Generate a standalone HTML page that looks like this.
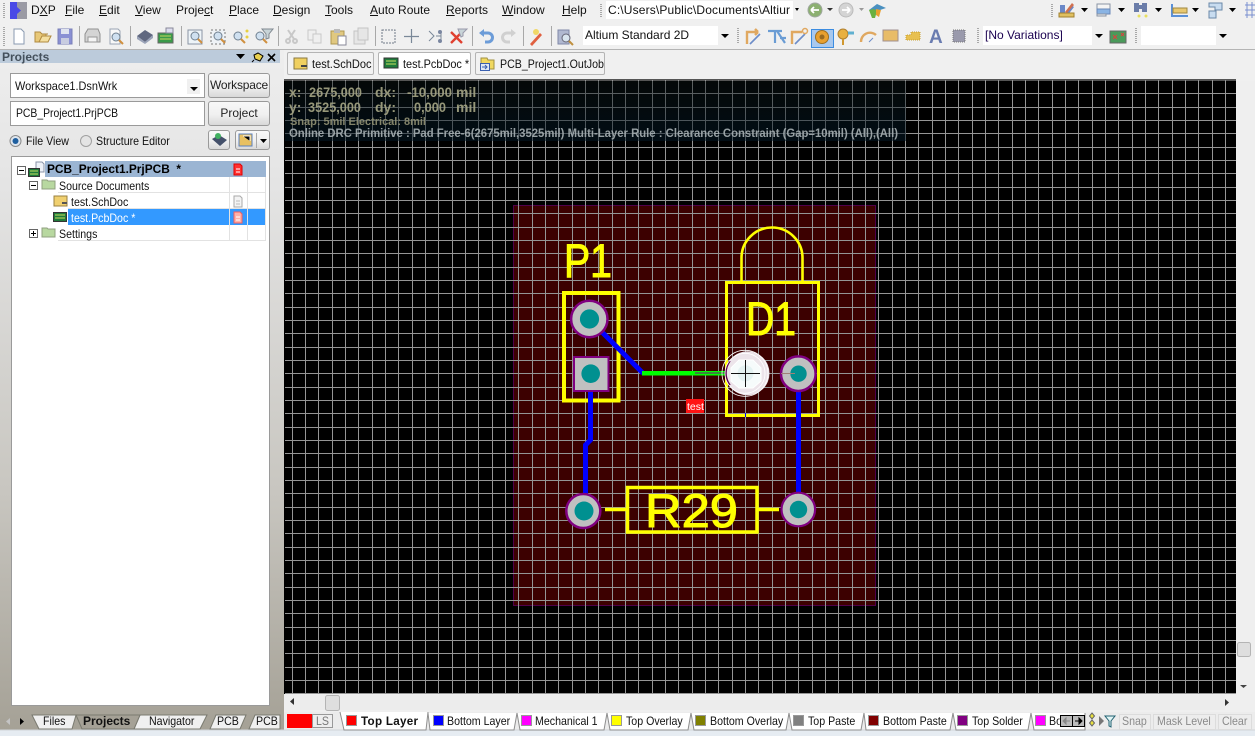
<!DOCTYPE html>
<html><head><meta charset="utf-8"><title>Altium</title>
<style>
html,body{margin:0;padding:0;width:1255px;height:736px;overflow:hidden;background:#f0f0f0}
body{position:relative;font:12px/14px "Liberation Sans",sans-serif;color:#111}
.a{position:absolute}
.t{position:absolute;white-space:nowrap;font:12px/14px "Liberation Sans",sans-serif;color:#111}
.n{transform:scaleX(.885);transform-origin:0 50%}
u{text-decoration:underline}
.btn{position:absolute;box-sizing:border-box;border:1px solid #9a9a9a;border-radius:3px;background:linear-gradient(#f8f8f8,#f0f0f0 55%,#d8d8d8);text-align:center;font:12px/22px "Liberation Sans",sans-serif;color:#222}
.field{position:absolute;box-sizing:border-box;background:#fff;border:1px solid #9a9a9a}
.combo{position:absolute;background:#fff;font:12px/19px "Liberation Sans",sans-serif;overflow:hidden;white-space:nowrap}
.dd{position:absolute;right:0;top:0;width:13px;height:100%;background:#f0f0f0}
.dd:after{content:"";position:absolute;left:3px;top:8px;border:4px solid transparent;border-top:4px solid #000;border-bottom:0}
.tab{position:absolute;box-sizing:border-box;top:52px;height:23px;border:1px solid #b4b4b4;border-radius:2px;background:#f2f2f2}
.row{position:absolute;left:0;width:254px;height:16px;border-bottom:1px solid #e2e2e2;box-sizing:border-box}
.sw{position:absolute;box-sizing:border-box;width:11px;height:11px;top:715px;border:1px solid #999}
.lb{position:absolute;box-sizing:border-box;top:714px;height:16px;background:#ededed;border:1px solid #dcdcdc}
</style></head><body>

<div class="a" style="left:0;top:49px;width:1255px;height:1px;background:#b4b4b4"></div>

<!-- left panel -->
<div class="a" style="left:0;top:50px;width:284px;height:680px;background:linear-gradient(#eeeeee 0,#e4e4e4 20%,#c8c6c0 65%,#a5a196 100%)"></div>
<div class="a" style="left:0;top:50px;width:280px;height:13px;background:#bccbdb"></div>
<div class="t" style="left:2px;top:50px;font-weight:bold;color:#44505c">Projects</div>

<div class="field" style="left:10px;top:73px;width:195px;height:25px"></div>
<div class="t n" style="left:15px;top:79px;transform:scaleX(.91)">Workspace1.DsnWrk</div>
<div class="dd" style="left:187px;top:79px;width:13px;height:15px;right:auto;background:#f0f0f0"></div>
<div class="btn" style="left:208px;top:73px;width:62px;height:25px;letter-spacing:-.2px">Workspace</div>
<div class="field" style="left:10px;top:101px;width:195px;height:25px"></div>
<div class="t n" style="left:16px;top:106px;transform:scaleX(.865)">PCB_Project1.PrjPCB</div>
<div class="btn" style="left:208px;top:101px;width:62px;height:25px">Project</div>
<div class="t n" style="left:26px;top:134px">File View</div>
<div class="t n" style="left:96px;top:134px">Structure Editor</div>
<div class="btn" style="left:208px;top:130px;width:22px;height:20px"></div>
<div class="btn" style="left:235px;top:130px;width:35px;height:20px"></div>

<!-- tree -->
<div class="a" style="left:11px;top:156px;width:259px;height:550px;box-sizing:border-box;background:#fff;border:1px solid #9a9a9a">
  <div class="a" style="left:33px;top:4px;width:221px;height:16px;background:#9bb5d3"></div>
  <div class="t" style="left:35px;top:5px;font-weight:bold;color:#000;transform:scaleX(.99);transform-origin:0 50%">PCB_Project1.PrjPCB&nbsp; *</div>
  <div class="row" style="top:20px;left:46px;width:208px"></div>
  <div class="t n" style="left:47px;top:22px">Source Documents</div>
  <div class="row" style="top:36px;left:56px;width:198px"></div>
  <div class="t n" style="left:59px;top:38px">test.SchDoc</div>
  <div class="a" style="left:56px;top:52px;width:198px;height:16px;background:#3399ff"></div>
  <div class="t n" style="left:59px;top:54px;color:#fff">test.PcbDoc *</div>
  <div class="row" style="top:68px;left:46px;width:208px"></div>
  <div class="t n" style="left:47px;top:70px">Settings</div>
  <div class="a" style="left:217px;top:20px;width:1px;height:64px;background:#e2e2e2"></div>
  <div class="a" style="left:235px;top:20px;width:1px;height:64px;background:#e2e2e2"></div>
  <div class="a" style="left:253px;top:20px;width:1px;height:64px;background:#e2e2e2"></div>
</div>

<!-- menu -->
<div class="t" style="left:31px;top:3px">D<u>X</u>P</div>
<div class="t" style="left:65px;top:3px"><u>F</u>ile</div>
<div class="t" style="left:99px;top:3px"><u>E</u>dit</div>
<div class="t" style="left:135px;top:3px"><u>V</u>iew</div>
<div class="t" style="left:176px;top:3px">Proje<u>c</u>t</div>
<div class="t" style="left:229px;top:3px"><u>P</u>lace</div>
<div class="t" style="left:273px;top:3px"><u>D</u>esign</div>
<div class="t" style="left:325px;top:3px"><u>T</u>ools</div>
<div class="t" style="left:370px;top:3px"><u>A</u>uto Route</div>
<div class="t" style="left:446px;top:3px"><u>R</u>eports</div>
<div class="t" style="left:502px;top:3px"><u>W</u>indow</div>
<div class="t" style="left:562px;top:3px"><u>H</u>elp</div>

<div class="combo" style="left:606px;top:1px;width:187px;height:18px;padding-left:2px;line-height:18px;box-sizing:border-box;letter-spacing:.15px">C:\Users\Public\Documents\Altiur</div>
<div class="combo" style="left:583px;top:26px;width:148px;height:19px;padding-left:2px;box-sizing:border-box">Altium Standard 2D<div class="dd"></div></div>
<div class="combo" style="left:983px;top:26px;width:122px;height:19px;padding-left:2px;box-sizing:border-box;color:#1a0050">[No Variations]<div class="dd"></div></div>
<div class="combo" style="left:1141px;top:26px;width:88px;height:19px"><div class="dd"></div></div>

<!-- doc tabs -->
<div class="tab" style="left:287px;width:87px"></div><div class="t" style="left:312px;top:57px;transform:scaleX(.92);transform-origin:0 50%">test.SchDoc</div>
<div class="tab" style="left:378px;width:93px;background:#fff"></div><div class="t" style="left:403px;top:57px;transform:scaleX(.91);transform-origin:0 50%">test.PcbDoc *</div>
<div class="tab" style="left:475px;width:130px"></div><div class="t" style="left:500px;top:57px;transform:scaleX(.885);transform-origin:0 50%">PCB_Project1.OutJob</div>

<!-- canvas -->
<div class="a" style="left:284px;top:79px;width:952px;height:615px;background:#000"></div>
<div class="a" style="left:284px;top:79px;width:952px;height:2px;background:#555"></div>
<div class="a" style="left:513px;top:205px;width:363px;height:401px;box-sizing:border-box;background:#3c0000;border:1px solid #50004a"></div>

<!-- grid -->
<svg class="a" style="left:0;top:0" width="1255" height="736" viewBox="0 0 1255 736" shape-rendering="crispEdges">
  <path fill="none" stroke="#959595" stroke-width="1" d="M292.5 80V694M305.5 80V694M318.5 80V694M332.5 80V694M345.5 80V694M358.5 80V694M372.5 80V694M385.5 80V694M398.5 80V694M412.5 80V694M425.5 80V694M438.5 80V694M452.5 80V694M465.5 80V694M478.5 80V694M492.5 80V694M505.5 80V694M518.5 80V694M532.5 80V694M545.5 80V694M558.5 80V694M572.5 80V694M585.5 80V694M598.5 80V694M612.5 80V694M625.5 80V694M638.5 80V694M652.5 80V694M665.5 80V694M678.5 80V694M692.5 80V694M705.5 80V694M718.5 80V694M732.5 80V694M745.5 80V694M758.5 80V694M772.5 80V694M785.5 80V694M798.5 80V694M812.5 80V694M825.5 80V694M838.5 80V694M852.5 80V694M865.5 80V694M878.5 80V694M892.5 80V694M905.5 80V694M918.5 80V694M932.5 80V694M945.5 80V694M958.5 80V694M972.5 80V694M985.5 80V694M998.5 80V694M1012.5 80V694M1025.5 80V694M1038.5 80V694M1052.5 80V694M1065.5 80V694M1078.5 80V694M1092.5 80V694M1105.5 80V694M1118.5 80V694M1132.5 80V694M1145.5 80V694M1158.5 80V694M1172.5 80V694M1185.5 80V694M1198.5 80V694M1212.5 80V694M1225.5 80V694"/>
  <path fill="none" stroke="#959595" stroke-width="1" d="M285 93.500H1236M285 107.500H1236M285 120.500H1236M285 133.500H1236M285 147.500H1236M285 160.500H1236M285 173.500H1236M285 187.500H1236M285 200.500H1236M285 213.500H1236M285 227.500H1236M285 240.500H1236M285 253.500H1236M285 267.500H1236M285 280.500H1236M285 293.500H1236M285 307.500H1236M285 320.500H1236M285 333.500H1236M285 347.500H1236M285 360.500H1236M285 373.500H1236M285 387.500H1236M285 400.500H1236M285 413.500H1236M285 427.500H1236M285 440.500H1236M285 453.500H1236M285 467.500H1236M285 480.500H1236M285 493.500H1236M285 507.500H1236M285 520.500H1236M285 533.500H1236M285 547.500H1236M285 560.500H1236M285 573.500H1236M285 587.500H1236M285 600.500H1236M285 613.500H1236M285 627.500H1236M285 640.500H1236M285 653.500H1236M285 667.500H1236M285 680.500H1236M285 693.500H1236"/>
</svg>

<!-- HUD over grid -->
<div class="a" style="left:285px;top:81px;width:621px;height:60px;background:linear-gradient(rgba(10,20,20,.4),rgba(3,24,38,.55))"></div>
<svg class="a" style="left:0;top:0" width="1255" height="736" viewBox="0 0 1255 736" font-family="Liberation Sans, sans-serif" opacity=".92">
  <g font-weight="bold" fill="#a3a383" font-size="14">
    <text x="289" y="97">x:</text><text x="309" y="97" textLength="53" lengthAdjust="spacingAndGlyphs">2675,000</text><text x="375" y="97">dx:</text><text x="407" y="97" textLength="45" lengthAdjust="spacingAndGlyphs">-10,000</text><text x="456" y="97">mil</text>
    <text x="289" y="112">y:</text><text x="308" y="112" textLength="53" lengthAdjust="spacingAndGlyphs">3525,000</text><text x="375" y="112">dy:</text><text x="414" y="112" textLength="32" lengthAdjust="spacingAndGlyphs">0,000</text><text x="456" y="112">mil</text>
  </g>
  <text x="290" y="125" font-size="11" font-weight="bold" fill="#8f8f72" textLength="136" lengthAdjust="spacingAndGlyphs">Snap: 5mil Electrical: 8mil</text>
  <text x="289" y="137" font-size="11.5" font-weight="bold" fill="#a4adb0" textLength="609" lengthAdjust="spacingAndGlyphs">Online DRC Primitive : Pad Free-6(2675mil,3525mil)  Multi-Layer Rule : Clearance Constraint (Gap=10mil) (All),(All)</text>
</svg>

<!-- PCB + chrome svg -->
<svg class="a" style="left:0;top:0" width="1255" height="736" viewBox="0 0 1255 736" font-family="Liberation Sans, sans-serif">
  <!-- silk -->
  <g fill="none" stroke="#ffff00" stroke-width="3">
    <rect x="564" y="293" width="54.500" height="107.500" stroke-width="4"/>
    <rect x="726.500" y="282.500" width="92" height="133"/>
    <path d="M741.500 281V258A30.500 30.500 0 0 1 802.500 258V281" stroke-width="2.600"/>
    <rect x="627.500" y="487.500" width="129.500" height="44.500" stroke-width="3.500"/>
    <path d="M605 509.500H626M758 509.500H779" stroke-width="3.600"/>
  </g>
  <g fill="#ffff00" stroke="#ffff00" stroke-width="1" font-size="47">
    <text x="564" y="277" textLength="48" lengthAdjust="spacingAndGlyphs">P1</text>
    <text x="746" y="335" textLength="50" lengthAdjust="spacingAndGlyphs">D1</text>
    <text x="645" y="527" textLength="93" lengthAdjust="spacingAndGlyphs">R29</text>
  </g>

  <!-- traces -->
  <g fill="none" stroke="#0000ff" stroke-width="5">
    <path d="M601.700 331.700L643 373.300"/>
    <path d="M590.500 391V440L585.500 445V495"/>
    <path d="M798.500 391V494"/>
  </g>
  <path d="M642 373.300H727" stroke="#00ff00" stroke-width="4.500"/>
  <path d="M695 373H727" stroke="#800080" stroke-width="1"/>

  <!-- pads -->
  <g>
    <circle cx="589.300" cy="319" r="18.200" fill="#c0c0c0" stroke="#800080" stroke-width="2.500"/>
    <circle cx="589.500" cy="319" r="9.600" fill="#009090"/>
    <rect x="574" y="357" width="34.500" height="34" fill="#c0c0c0" stroke="#800080" stroke-width="2"/>
    <circle cx="590.700" cy="373.700" r="9.300" fill="#009090"/>
    <circle cx="798.300" cy="373.700" r="17.300" fill="#c0c0c0" stroke="#800080" stroke-width="2.500"/>
    <circle cx="798.500" cy="373.700" r="8.200" fill="#009090"/>
    <path d="M781 373.500H795" stroke="#a08078" stroke-width="1"/>
    <circle cx="583.300" cy="511" r="17" fill="#c0c0c0" stroke="#800080" stroke-width="2.500"/>
    <circle cx="584" cy="511" r="9.500" fill="#009090"/>
    <circle cx="798.300" cy="509.500" r="16.800" fill="#c0c0c0" stroke="#800080" stroke-width="2.200"/>
    <circle cx="798.500" cy="509.500" r="8.700" fill="#009090"/>
    <!-- ghost pad -->
    <circle cx="747.500" cy="373.300" r="22" fill="#ece4ea"/>
    <path d="M730 385a20 20 0 0 1 0-24" fill="none" stroke="#600050" stroke-width="1.500"/>
    <path d="M739 360H753L761 368V381L753 388H739L731 381V368Z" fill="#f6fbfb" stroke="#fff"/>
    <circle cx="745.500" cy="373.300" r="8" fill="#e4f2f2"/>
    <circle cx="745" cy="373.300" r="20" fill="none" stroke="#fff" stroke-width=".8"/>
    <circle cx="745" cy="373.300" r="23" fill="none" stroke="#fff" stroke-width=".8"/>
    <path d="M745.500 360V387M731 373.500H760" stroke="#111" stroke-width="1"/>
    <path d="M745.500 413V417" stroke="#0000ff"/>
  </g>
  <rect x="686" y="399" width="18" height="14" fill="#ff1414"/>
  <text x="687" y="410" font-size="10.500" fill="#fff">test</text>

  <!-- DXP logo + grips -->
  <rect x="10" y="2" width="17" height="17" fill="#4a4ae6"/>
  <path d="M17 2H27V19H17V14L21 10.500 17 7Z" fill="#9a9aa4"/>
  <path d="M4 3V18M4 27V46M1052 4V18M738 28V44M978 28V44M1136 28V44M601 4V18" stroke="#a8a8a8" stroke-width="2" stroke-dasharray="1 1"/>
  <g stroke="#a8a8a8"><path d="M79.500 26V46M130.500 26V46M181.500 26V46M278.500 26V46M375.500 26V46M472.500 26V46M523.500 26V46M551.500 26V46"/></g>

  <!-- toolbar icons row 2 -->
  <path d="M14 29h7l3 3v12H14Z" fill="#fff" stroke="#8a9ab0"/>
  <path d="M35 42V32h5l2 2h6l-2 0v8Z" fill="#e8c878" stroke="#b08a40"/><path d="M39 42l3-6h9l-3 6Z" fill="#f4dfa0" stroke="#b08a40"/>
  <rect x="58" y="29" width="14" height="15" fill="#8a90d4" stroke="#7a80b8"/><rect x="61" y="29" width="8" height="5" fill="#e0e4f0"/><rect x="61" y="38" width="8" height="6" fill="#c8cce0"/>
  <path d="M88 29h10l2 5v8H85v-8Z" fill="#d4d4d4" stroke="#909090"/><rect x="88" y="37" width="9" height="5" fill="#f4f4f4" stroke="#999"/>
  <path d="M110 29h8l2 2v13h-10Z" fill="#f8f8f8" stroke="#9aa4b4"/><circle cx="116" cy="37" r="4" fill="#cfe0f0" stroke="#708090"/><path d="M119 40l4 4" stroke="#d09040" stroke-width="2"/>
  <path d="M137 36l8-6 8 5-8 7Z" fill="#606880"/><path d="M137 36v3l8 5 8-6v-3l-8 7Z" fill="#9aa3b8"/>
  <rect x="158" y="33" width="15" height="10" fill="#3a9a4a" stroke="#666"/><path d="M166 28h7v5h-7Z" fill="#dde" stroke="#889"/><path d="M160 36h11M160 39h11" stroke="#c8d860"/>
  <rect x="188" y="30" width="14" height="14" fill="#eef4f8" stroke="#8a94a4"/><circle cx="195" cy="36" r="4" fill="#cfe0f0" stroke="#708090"/><path d="M198 39l4 4" stroke="#d09040" stroke-width="2"/>
  <rect x="211" y="30" width="14" height="14" fill="#eef2f6" stroke="#777" stroke-dasharray="2 2"/><circle cx="218" cy="36" r="4" fill="#cfe0f0" stroke="#708090"/><path d="M221 39l4 4" stroke="#d09040" stroke-width="2"/>
  <circle cx="238" cy="36" r="4" fill="#cfe0f0" stroke="#708090"/><path d="M241 39l4 4" stroke="#d09040" stroke-width="2"/><circle cx="247" cy="31" r="1.500" fill="#e8d040"/><circle cx="247" cy="37" r="1.500" fill="#e8d040"/>
  <circle cx="260" cy="36" r="4" fill="#cfe0f0" stroke="#708090"/><path d="M263 39l4 4" stroke="#d09040" stroke-width="2"/><path d="M262 29h11l-4 5v4l-3 1v-5Z" fill="#c8d4d8" stroke="#808890"/>
  <g fill="none" stroke="#c8c8c8" stroke-width="2"><path d="M288 30l6 9M295 30l-6 9"/><circle cx="288" cy="41" r="2"/><circle cx="295" cy="41" r="2"/></g>
  <g fill="#efefef" stroke="#c8c8c8"><rect x="308" y="30" width="8" height="10"/><rect x="313" y="34" width="8" height="9"/></g>
  <rect x="331" y="31" width="13" height="13" fill="#e0c880" stroke="#b09850"/><rect x="334" y="29" width="6" height="4" fill="#bbb"/><rect x="338" y="36" width="8" height="9" fill="#fff" stroke="#889"/>
  <g fill="#e6e6e6" stroke="#c4c4c4"><rect x="354" y="31" width="11" height="13"/><rect x="358" y="28" width="10" height="12"/></g>
  <rect x="382" y="30" width="13" height="13" fill="none" stroke="#707a88" stroke-dasharray="2 1"/>
  <path d="M411.500 29V43M404 36.500H419" stroke="#7a8898" stroke-width="1.200"/>
  <path d="M429 31l5 5-5 5M441 32v9M436 36h5" stroke="#7a8898" fill="none"/><circle cx="440" cy="32" r="2" fill="#7a86a0"/><circle cx="440" cy="41" r="2" fill="#7a86a0"/>
  <path d="M451 32l11 11M462 32l-11 11" stroke="#e04030" stroke-width="2.400"/><path d="M458 29h9l-4 4v3l-2 1Z" fill="#c8d4d8" stroke="#99a"/>
  <path d="M481 33h7a4 4 0 0 1 0 9h-3" fill="none" stroke="#6c9cd8" stroke-width="3"/><path d="M484 29l-5 4 5 4Z" fill="#6c9cd8"/>
  <path d="M514 33h-7a4 4 0 0 0 0 9h3" fill="none" stroke="#d0d0d0" stroke-width="3"/><path d="M511 29l5 4-5 4Z" fill="#d0d0d0"/>
  <path d="M530 44l10-11 2 2-10 11Z" fill="#e06040"/><circle cx="536" cy="32" r="3" fill="#f0d868"/>
  <rect x="558" y="30" width="11" height="14" fill="#b0b8d0" stroke="#8088a8"/><circle cx="566" cy="38" r="4" fill="#d8e4ee" stroke="#667"/><path d="M569 41l4 4" stroke="#c09040" stroke-width="2"/>

  <!-- place icons -->
  <path d="M747 44V32h11M758 32l-3-3M758 32l-3 3" fill="none" stroke="#e0a860" stroke-width="2.400"/><path d="M750 44l10-10" stroke="#6c8cc8" stroke-width="1.600"/>
  <path d="M768 31h14M777 31l8 12M775 31v12M780 38h6" fill="none" stroke="#6a9cd4" stroke-width="2.200"/>
  <path d="M792 44V32h10" fill="none" stroke="#e0a860" stroke-width="2.400"/><path d="M795 44l10-10" stroke="#6c8cc8" stroke-width="1.600"/><circle cx="805" cy="31" r="2.500" fill="none" stroke="#e0a860" stroke-width="1.500"/>
  <rect x="811.500" y="29.500" width="22" height="18" fill="#a8c8ee" stroke="#3c8ce0"/>
  <circle cx="822" cy="37" r="6.500" fill="#e8a030" stroke="#a07020"/><circle cx="822" cy="37" r="2.500" fill="#9a6a20"/>
  <circle cx="843" cy="34" r="5" fill="#e8b040" stroke="#b08030"/><path d="M843 39v6" stroke="#d09830" stroke-width="2"/><path d="M848 33h6" stroke="#60b0d0" stroke-width="3"/>
  <path d="M861 42a9 9 0 0 1 15-7" fill="none" stroke="#e0a860" stroke-width="2.400"/><path d="M869 42l4-4" stroke="#6c8cc8"/>
  <rect x="883" y="30" width="15" height="11" fill="#e8bc68" stroke="#a09090"/>
  <path d="M906 40v-5h5v-3h9v8Z" fill="#e8c050" stroke="#c8a030" stroke-dasharray="1 1"/>
  <text x="929" y="43" font-size="19" font-weight="bold" font-family="Liberation Sans, sans-serif" fill="#6a7cb0">A</text>
  <rect x="953" y="30" width="12" height="12" fill="#9a9aac" stroke="#777" stroke-dasharray="1 1"/>
  <rect x="1110" y="31" width="16" height="12" fill="#4a9a5a" stroke="#666"/><path d="M1113 35l4 4M1117 35l-4 4M1121 33l3 3M1124 33l-3 3" stroke="#e04040"/>

  <!-- nav -->
  <path d="M795 8l4 0-2 3Z" fill="#000"/>
  <circle cx="815" cy="10" r="7" fill="#8cb070" stroke="#a0a8a0"/><path d="M811 10h8M811 10l3-3M811 10l3 3" stroke="#fff" stroke-width="1.800" fill="none"/>
  <path d="M827 8h6l-3 3Z" fill="#333"/>
  <circle cx="846" cy="10" r="7" fill="#d4d4d4" stroke="#bbb"/><path d="M842 10h8M850 10l-3-3M850 10l-3 3" stroke="#fff" stroke-width="1.800" fill="none"/>
  <path d="M859 8h5l-2.500 3Z" fill="#999"/>
  <path d="M869 10l8-6 9 4-9 3Z" fill="#4a90c0"/><path d="M869 10l5-1 3 2-2 7h-3Z" fill="#6ab040"/><path d="M876 9l5 1-2 7-3-2Z" fill="#e8a030"/>

  <!-- right toolbar -->
  <path d="M1060 5h5v8l6-8 3 2-7 9h-7Z" fill="#6a88c8"/><rect x="1059" y="13" width="15" height="4" fill="#e0c060" stroke="#a08030"/><path d="M1065 12l7-9 2 2-7 8Z" fill="#d07050"/>
  <rect x="1097" y="4" width="13" height="5" fill="#f4f4f4" stroke="#8a94a4"/><rect x="1097" y="9" width="13" height="5" fill="#8ab4e4" stroke="#6a88b8"/><rect x="1097" y="14" width="9" height="2" fill="#eee" stroke="#8a94a4"/>
  <g fill="#6a7ca8"><rect x="1134" y="3" width="5" height="9"/><rect x="1142" y="3" width="5" height="9"/><rect x="1139" y="5" width="3" height="4"/></g><circle cx="1139" cy="16" r="1.500" fill="#e8e060"/><circle cx="1146" cy="16" r="1.500" fill="#e8e060"/>
  <path d="M1172 4v12h16" fill="none" stroke="#5a90d8" stroke-width="2"/><rect x="1173" y="8" width="14" height="5" fill="#e8c870" stroke="#a08840"/>
  <path d="M1209 3h13v7h-6v8h-7v-7h6V7h-6Z" fill="#c8dcf0" stroke="#6a88a8"/>
  <path d="M1245 5h10M1245 10h10M1245 15h10M1247 2v16M1252 2v16" stroke="#7a90d0"/>
  <g fill="#000"><path d="M1081 8h7l-3.500 4Z"/><path d="M1118 8h7l-3.500 4Z"/><path d="M1155 8h7l-3.500 4Z"/><path d="M1192 8h7l-3.500 4Z"/><path d="M1229 8h7l-3.500 4Z"/></g>

  <!-- panel header icons -->
  <path d="M236 54h9l-4.500 5Z" fill="#000"/>
  <path d="M254 55l4-2 5 3-3 5-5-2Z" fill="#e8d050" stroke="#000"/><path d="M254 60l-2 2" stroke="#000"/>
  <path d="M268 54l7 7M275 54l-7 7" stroke="#000" stroke-width="1.600"/>
  <circle cx="15.500" cy="141" r="5.500" fill="#dfe6ee" stroke="#8a8a8a"/><circle cx="15.500" cy="141" r="3" fill="#1f5f9f"/>
  <circle cx="86" cy="141" r="5.500" fill="#e4e4e4" stroke="#a0a0a0"/>
  <path d="M212 139l7-4 8 5-7 6Z" fill="#44506a"/><circle cx="218" cy="136" r="3" fill="#40b060"/>
  <rect x="239" y="134" width="13" height="12" fill="#e8c060" stroke="#5a80c0"/><path d="M243 136h7v5" stroke="#fff"/><path d="M260 139h7l-3.500 4Z" fill="#000"/><path d="M256.500 133v15" stroke="#aaa"/>

  <!-- tree icons -->
  <rect x="17.500" y="166.500" width="8" height="8" fill="#fff" stroke="#666"/><path d="M19 170.500h5" stroke="#000"/>
  <path d="M36 162h6l2 2v8h-8Z" fill="#eef2f8" stroke="#8a94a8"/><rect x="28.500" y="168.500" width="11" height="8" fill="#1f7a3a" stroke="#333"/><path d="M30 171h8M30 174h8" stroke="#c8e060"/>
  <path d="M234 164h6l2 2v9h-8Z" fill="#ff3030" stroke="#e00000"/><path d="M236 169h4M236 172h4" stroke="#fff"/>
  <rect x="29.500" y="181.500" width="8" height="8" fill="#fff" stroke="#666"/><path d="M31 185.500h5" stroke="#000"/>
  <path d="M42 189v-9h5l1 1h7v8Z" fill="#b8d8a0" stroke="#90a080"/>
  <path d="M54 196h13v10H54Z" fill="#f0d070" stroke="#9a8040"/><path d="M62 203h5" stroke="#555" stroke-width="2"/>
  <path d="M234 196h6l2 2v9h-8Z" fill="#f4f4f4" stroke="#aaa"/><path d="M236 201h4M236 204h4" stroke="#bbb"/>
  <rect x="53.500" y="212.500" width="13" height="9" fill="#1f7a3a" stroke="#333"/><path d="M55 215h10M55 218h10" stroke="#c8e060"/>
  <path d="M234 212h6l2 2v9h-8Z" fill="#ffb0a8" stroke="#f06060"/><path d="M236 217h4M236 220h4" stroke="#fff"/>
  <rect x="29.500" y="229.500" width="8" height="8" fill="#fff" stroke="#666"/><path d="M31 233.500h5M33.500 231v5" stroke="#000"/>
  <path d="M42 237v-9h5l1 1h7v8Z" fill="#b8d8a0" stroke="#90a080"/>

  <!-- doc tab icons -->
  <path d="M294 58h13v11H294Z" fill="#f0d060" stroke="#8a7840"/><path d="M301 66h6" stroke="#444" stroke-width="2"/>
  <rect x="384" y="58" width="14" height="10" fill="#1f7a3a" stroke="#333"/><path d="M386 61h10M386 64h10" stroke="#c8e060"/>
  <path d="M481 63v-5h6l1 2h6v9h-13Z" fill="#f0d860" stroke="#a09040"/><rect x="480.500" y="63.500" width="9" height="7" fill="#dfe8f4" stroke="#3a60b0"/><path d="M482 67h5M485 65l2 2-2 2" stroke="#3a60b0" fill="none"/>

  <!-- scrollbars -->
  <rect x="1236" y="81" width="19" height="631" fill="#efefef"/>
  <rect x="284" y="694" width="971" height="18" fill="#efefef"/>
  <rect x="300" y="695" width="925" height="15" fill="#ececec"/>
  <rect x="325.500" y="695.500" width="14" height="15" rx="2" fill="#dedede" stroke="#b4b4b4"/>
  <rect x="1237.500" y="642.500" width="13" height="14" rx="2" fill="#dedede" stroke="#b4b4b4"/>
  <path d="M294 698v7l-4-3.500Z" fill="#333"/><path d="M1225 699v7l4-3.500Z" fill="#333"/><path d="M1240 685h7l-3.500 3Z" fill="#444"/>

  <!-- layer strip -->
  <rect x="284" y="712" width="971" height="19" fill="#ececec"/>
  <rect x="0" y="730" width="1255" height="6" fill="#e6ecf2"/>
  <path d="M0 730H1255" stroke="#d0d4d8"/>
  <g fill="#fff" stroke="#8e8e8e">
    <path d="M340 712L344 730H426L428 712"/>
    <path d="M428 713L430 730H514L517 713"/>
    <path d="M517 713L520 730H604L607 713"/>
    <path d="M607 713L610 730H688L691 713"/>
    <path d="M691 713L694 730H786L789 713"/>
    <path d="M789 713L792 730H861L864 713"/>
    <path d="M864 713L866 730H950L953 713"/>
    <path d="M953 713L956 730H1028L1031 713"/>
    <path d="M1031 713L1034 730H1085V713"/>
  </g>

  <!-- bottom panel tabs -->
  <g fill="#f0f0f0" stroke="#7a7a70">
    <path d="M32 715L39 729H72L76 715Z"/>
    <path d="M140 715L134 729H200L207 715Z"/>
    <path d="M216 715L210 729H240L246 715Z"/>
    <path d="M255 715L249 729H280V715Z"/>
  </g>
  <path d="M76 715L82 729H134L140 715Z" fill="#a5a196" stroke="#7a7a70"/>
  <path d="M10 718v7l-4-3.500Z" fill="#c4c4c4"/><path d="M20 718v7l4-3.500Z" fill="#000"/>

  <!-- LS -->
  <rect x="287" y="714" width="25" height="14" fill="#ff0000"/>
  <rect x="312.500" y="714.500" width="20" height="13" fill="#eee" stroke="#999"/>

  <!-- nav right tiny -->
  <rect x="1060.500" y="715.500" width="12" height="11" fill="#bbb" stroke="#000"/><rect x="1072.500" y="715.500" width="12" height="11" fill="#bbb" stroke="#000"/>
  <path d="M1063 721h3v-3l-3 3 3 3v-3h4" fill="#888" stroke="#888"/><path d="M1082 721h-3v-3l3 3-3 3v-3h-4" fill="#000" stroke="#000"/>
  <path d="M1092 713l2.500 3-2.500 3-2.500-3ZM1092 720l2.500 3-2.500 3-2.500-3Z" fill="#e8e040" stroke="#666"/>
  <path d="M1099 716v10l5-5Z" fill="#777"/>
  <path d="M1105 716h10l-4 5v6l-2-1v-5Z" fill="#e0f4f4" stroke="#206070"/>
</svg>

<div class="t n" style="left:316px;top:714px;color:#777">LS</div>
<div class="sw" style="left:346px;background:#f00"></div>
<div class="t" style="left:361px;top:714px;font-weight:bold;transform:scaleX(.97);transform-origin:0 50%;letter-spacing:.3px">Top Layer</div>
<div class="sw" style="left:433px;background:#00f"></div><div class="t n" style="left:447px;top:714px">Bottom Layer</div>
<div class="sw" style="left:521px;background:#f0f"></div><div class="t n" style="left:535px;top:714px">Mechanical 1</div>
<div class="sw" style="left:611px;background:#ff0"></div><div class="t n" style="left:626px;top:714px">Top Overlay</div>
<div class="sw" style="left:695px;background:#808000"></div><div class="t n" style="left:710px;top:714px">Bottom Overlay</div>
<div class="sw" style="left:793px;background:#808080"></div><div class="t n" style="left:808px;top:714px">Top Paste</div>
<div class="sw" style="left:868px;background:#800000"></div><div class="t n" style="left:883px;top:714px">Bottom Paste</div>
<div class="sw" style="left:957px;background:#800080"></div><div class="t n" style="left:972px;top:714px">Top Solder</div>
<div class="sw" style="left:1035px;background:#f0f"></div><div class="t n" style="left:1049px;top:714px;width:12px;overflow:hidden">Bo</div>
<div class="lb" style="left:1119px;width:32px"></div><div class="t n" style="left:1122px;top:714px;color:#8a8a8a">Snap</div>
<div class="lb" style="left:1153px;width:63px"></div><div class="t n" style="left:1157px;top:714px;color:#8a8a8a">Mask Level</div>
<div class="lb" style="left:1218px;width:34px"></div><div class="t n" style="left:1222px;top:714px;color:#8a8a8a">Clear</div>

<div class="t n" style="left:43px;top:714px">Files</div>
<div class="t" style="left:83px;top:714px;font-weight:bold">Projects</div>
<div class="t n" style="left:149px;top:714px">Navigator</div>
<div class="t n" style="left:217px;top:714px">PCB</div>
<div class="t n" style="left:256px;top:714px;width:28px;overflow:hidden">PCB F</div>
</body></html>
